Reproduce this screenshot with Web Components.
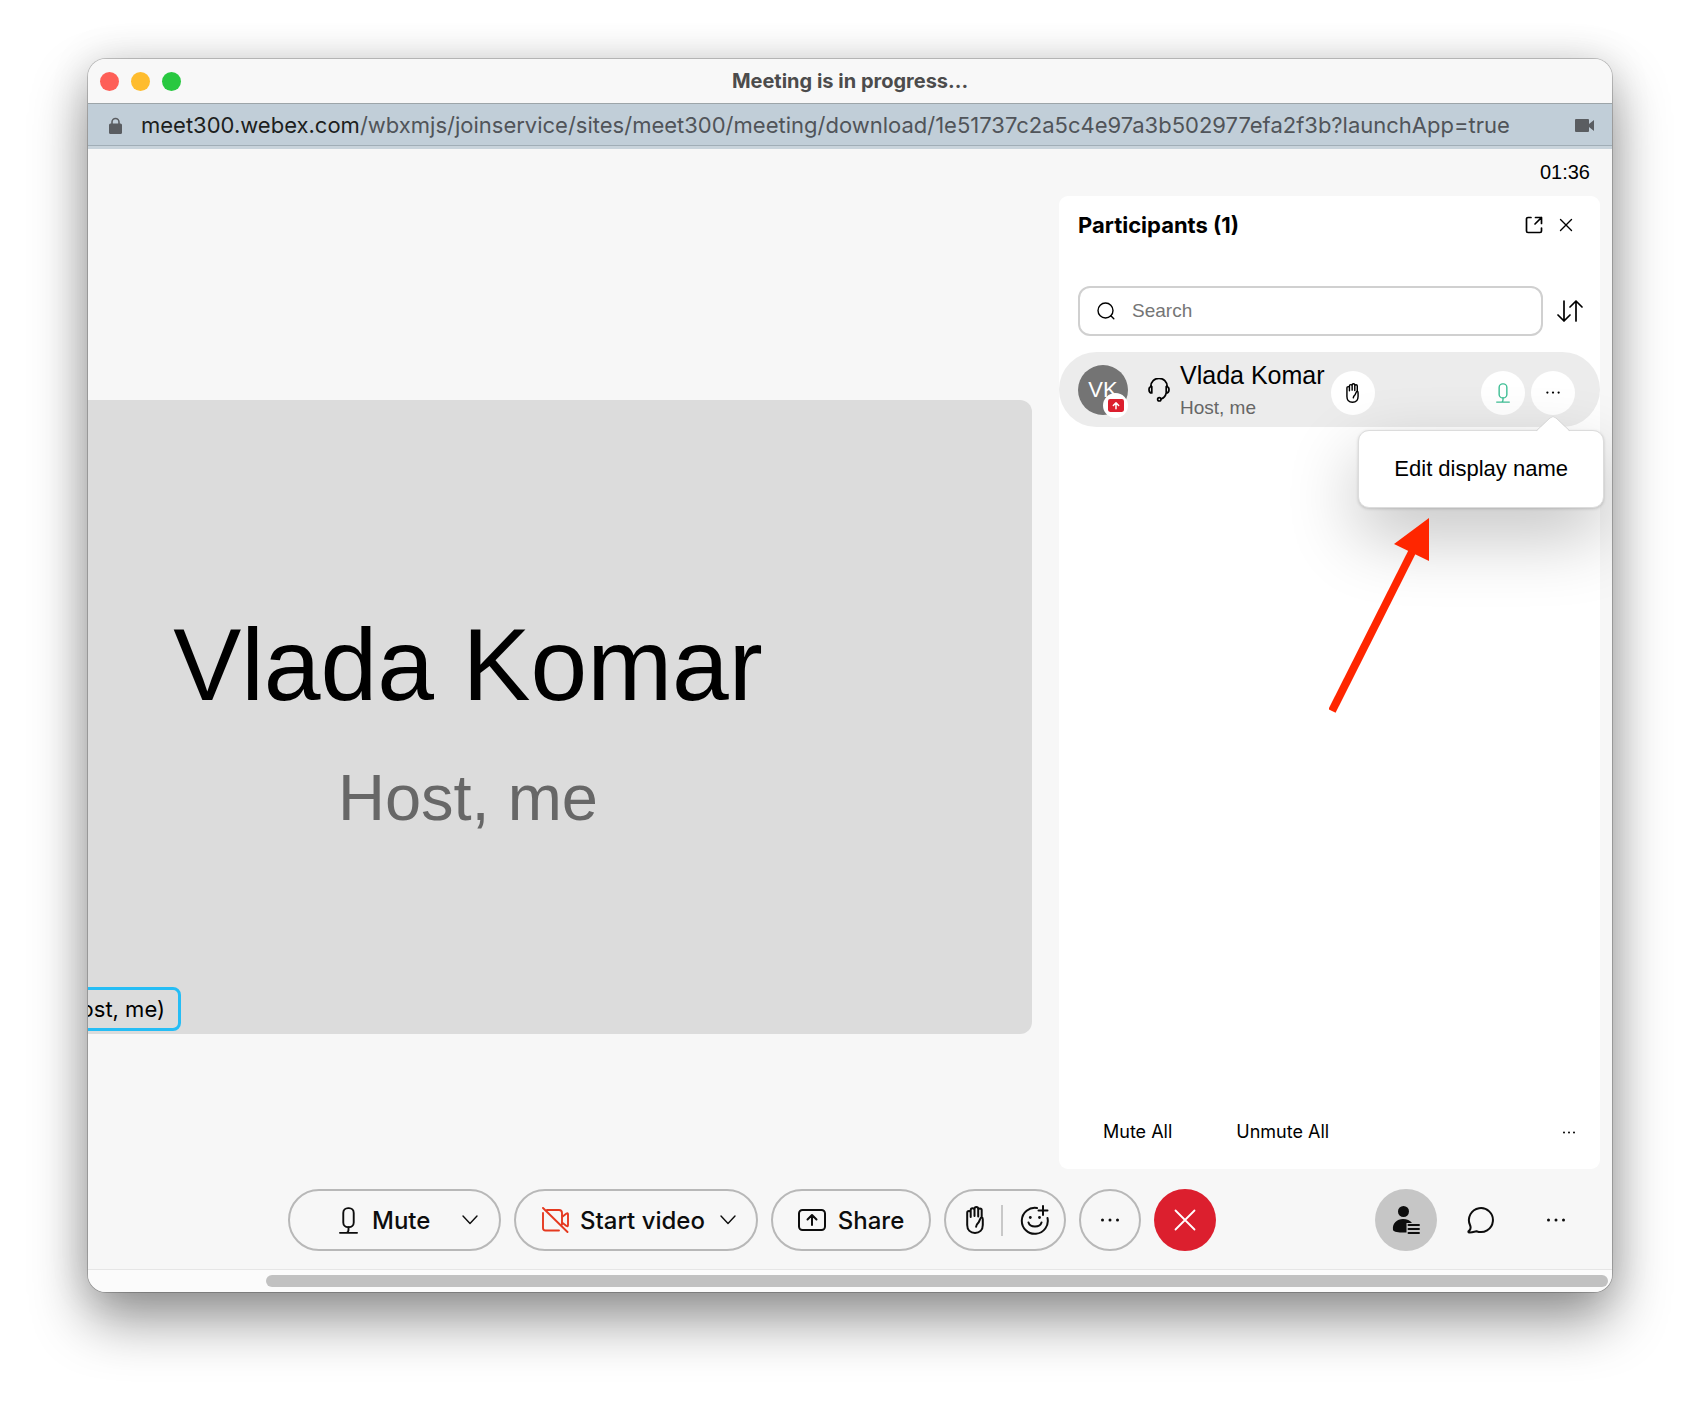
<!DOCTYPE html>
<html lang="en">
<head>
<meta charset="utf-8">
<title>Meeting is in progress...</title>
<style>
  body { margin: 0; background: #fff; font-family: "Liberation Sans", Arial, sans-serif; color: #000; }
  meeting-app { padding: 59px 88px 116px; min-height: 100vh; box-sizing: border-box; }
</style>
</head>
<body>
<meeting-app></meeting-app>
<script>
const define = (name, html) => customElements.define(name, class extends HTMLElement {
  constructor() {
    super();
    this.attachShadow({ mode: 'open' }).innerHTML =
      '<style>:host,*{box-sizing:border-box}button{font:inherit;color:inherit;background:none;border:0;padding:0;margin:0;display:flex;align-items:center;justify-content:center}</style>' + html;
  }
});

const ICONS = {
  lock: [13, 17, '<path d="M3 8V5a3.500 3.500 0 0 1 7 0v3" stroke-width="1.600"/><rect y="6.500" width="13" height="10.500" rx="1.500" fill="currentColor" stroke="none"/>'],
  camera: [19, 13, '<path d="M1 0h12q1 0 1 1v4l5-4v11l-5-4v4q0 1-1 1H1q-1 0-1-1V1q0-1 1-1z" fill="currentColor" stroke="none"/>'],
  popout: [18, 18, '<path d="M6 1.500H3A1.500 1.500 0 0 0 1.500 3v12A1.500 1.500 0 0 0 3 16.500h12a1.500 1.500 0 0 0 1.500-1.500v-3M10.500 1.500h6v6M16.500 1.500L10 8"/>'],
  close: [14, 14, '<path d="M1.500 1.500l11 11M12.500 1.500l-11 11" stroke-width="1.400"/>'],
  leave: [22, 22, '<path d="M1.500 1.500l19 19M20.500 1.500l-19 19" stroke-width="1.800"/>'],
  search: [18, 18, '<circle cx="8.500" cy="8.500" r="7.500" stroke-width="1.400"/><path d="M13.800 13.800l3 3" stroke-width="1.400"/>'],
  sort: [26, 22, '<path d="M7 1v20M1 15l6 6 6-6M19 21V1M13 7l6-6 6 6" stroke-width="1.700"/>'],
  headset: [22, 24, '<path d="M2.800 8.500A8.200 8.200 0 0 1 19.200 8.500M3.800 8.500c-2 0-2.800 1.300-2.800 3.200s.8 3.300 2.800 3.300zM18.200 8.500c2 0 2.800 1.300 2.800 3.200s-.8 3.300-2.800 3.300zM18.200 15c-.8 3.500-3 5.300-5.200 6"/><circle cx="11.300" cy="21.300" r="1.700"/>'],
  hand: [18, 28, '<path d="M1.200 11V6.800a1.700 1.700 0 0 1 3.500 0V4.200a1.800 1.800 0 0 1 3.800 0V2.900a1.800 1.800 0 0 1 3.700 0v1.300a1.700 1.700 0 0 1 3.500 0v7c1 .6 1.200 1.500 1.100 2.800V19c0 5-3.300 8-7.800 8s-7.800-3-7.800-8zM4.700 6.800V11M8.500 4.200V10M12.200 4.200V10.500M15.700 11.200c-2 1-2 4-3.400 5.600-1.400 1.300-2.100 2.300-2.200 4" />'],
  mic: [20, 28, '<rect x="4.500" y="1" width="11" height="20" rx="5"/><path d="M10 21v2.500q0 3-2 3.500M1 27h18" />'],
  novideo: [28, 26, '<path d="M2 6v15q0 2.500 2.500 2.500H18M6 3h12q3 0 3 3v11.500M21 10l4.500-3.500q1.500-.8 1.500 1V18q0 1.800-1.500 1L21 15.500M2 1l24.500 24" stroke-width="1.900"/>'],
  share: [28, 22, '<rect x="1" y="1" width="26" height="20" rx="3.500"/><path d="M14 16V6.500M9.500 10.500L14 6l4.500 4.500"/>'],
  smile: [30, 30, '<path d="M17 3A13 13 0 1 0 27.500 13M23 1v9M18.500 5.500h9M8.500 17.500c1.500 5.300 11.500 5.300 13 0"/><g fill="currentColor" stroke="none"><circle cx="10.300" cy="12.500" r="1.400"/><circle cx="19.500" cy="12.500" r="1.400"/></g>'],
  chevron: [16, 10, '<path d="M1 1l7 7.500L15 1" stroke-width="1.400"/>'],
  dots: [18, 4, '<g fill="currentColor" stroke="none"><circle cx="1.500" cy="2" r="1.500"/><circle cx="9" cy="2" r="1.500"/><circle cx="16.500" cy="2" r="1.500"/></g>'],
  people: [28, 28, '<g fill="currentColor" stroke="none"><circle cx="11.500" cy="5.500" r="5.500"/><path d="M1 24c-.8-7 4-11 10-11 4 0 7 1.200 9 4h-5.500v9.500C9 26.700 2 26.500 1 24z"/></g><path d="M16.500 19h10.500M16.500 23h10.500M16.500 27h10.500" stroke-width="1.900"/>'],
  chat: [28, 28, '<path d="M3 19A12 12 0 1 1 9.500 25.200c-2 .5-4.500 1.300-7 1.300-1.300 0-1.500-.8-.5-1.600 1.700-1.400 2-3.500 1-5.900z"/>'],
  present: [15, 12, '<rect width="15" height="12" rx="2" fill="#dc1f2e" stroke="none"/><path d="M7.500 9V4M5 6l2.500-2.500L10 6" stroke="#fff" stroke-width="1.400"/>']
};
customElements.define('ui-icon', class extends HTMLElement {
  connectedCallback() {
    const [w, h, body] = ICONS[this.getAttribute('name')];
    const s = this.getAttribute('width') || w;
    (this.shadowRoot || this.attachShadow({ mode: 'open' })).innerHTML =
      `<style>:host{display:block;flex:none}svg{display:block}</style><svg aria-hidden="true" width="${s}" height="${Math.round(s * h / w)}" viewBox="0 0 ${w} ${h}" fill="none" stroke="currentColor" stroke-width="${this.getAttribute('stroke') || 2}" stroke-linecap="round" stroke-linejoin="round">${body}</svg>`;
  }
});

define('title-bar', `
<style>
  :host { display: grid; grid-template-columns: 1fr auto 1fr; align-items: center; height: 45px; padding: 0 12px; background: #f8f8f8; border-bottom: 1px solid #9da5a9; font-family: Inter, sans-serif; }
  .lights { display: flex; gap: 12px; }
  .lights button { width: 19px; height: 19px; border-radius: 50%; }
  h1 { margin: 0; font-size: 20px; line-height: 24px; font-weight: 700; color: #4c4c4c; }
</style>
<div class="lights">
  <button aria-label="Close" style="background:#fe5f57"></button>
  <button aria-label="Minimize" style="background:#febc2e"></button>
  <button aria-label="Zoom" style="background:#28c840"></button>
</div>
<h1><slot></slot></h1><span></span>`);

define('address-bar', `
<style>
  :host { display: flex; align-items: center; height: 45px; padding: 0 18px 0 21px; background: #c1ced8; border-bottom: 3px solid #c8d3db; box-shadow: inset 0 -1px #a0adb6; color: #5a5d61; font-family: Inter, sans-serif; }
  p { flex: 1; margin: 0 0 0 19px; font-size: 22px; line-height: 26px; color: #505459; white-space: nowrap; }
  b { font-weight: 400; color: #1c1e20; }
</style>
<ui-icon name="lock"></ui-icon>
<p><b><slot name="host"></slot></b><slot></slot></p>
<ui-icon name="camera"></ui-icon>`);

define('video-tile', `
<style>
  :host { display: flex; flex-direction: column; align-items: center; position: relative; height: 634px; padding: 206px 184px 0 0; background: #dcdcdc; border-radius: 0 12px 12px 0; overflow: hidden; white-space: nowrap; }
  h2 { margin: 0; font-size: 102px; line-height: 118px; font-weight: 400; }
  p { margin: 36px 0 0; font-size: 65px; line-height: 76px; color: #676767; }
  .tag { position: absolute; left: -10px; bottom: 3px; height: 44px; width: 103px; border: 3px solid #25bdf5; border-radius: 8px; padding-right: 13px; display: flex; align-items: center; justify-content: flex-end; font: 22px Inter, sans-serif; }
</style>
<h2><slot name="name"></slot></h2>
<p><slot name="role"></slot></p>
<div class="tag"><slot name="tag"></slot></div>`);

define('popup-menu', `
<style>
  :host { display: block; position: absolute; z-index: 2; }
  .menu { border: 1px solid #dcdcdc; border-radius: 11px; background: #fff; box-shadow: 0 28px 70px rgba(0,0,0,.24), 0 1px 3px rgba(0,0,0,.16); padding: 20px 35px; }
  button { font-size: 22px; line-height: 36px; white-space: nowrap; }
  svg { position: absolute; top: -14px; right: 33px; display: block; }
</style>
<div class="menu" role="menu"><button role="menuitem"><slot></slot></button></div>
<svg width="36" height="16" viewBox="0 0 36 16" aria-hidden="true"><path d="M1 16L15 2q3-3 6 0l14 14z" fill="#fff"/><path d="M1 15L15 2q3-3 6 0l14 13" fill="none" stroke="#d8d8d8"/></svg>`);

define('participant-row', `
<style>
  :host { display: flex; align-items: center; position: relative; height: 75px; padding: 0 25px 0 19px; background: #ececec; border-radius: 38px; }
  .avatar { position: relative; width: 50px; height: 50px; border-radius: 50%; background: #747474; color: #fff; font-size: 22px; display: flex; align-items: center; justify-content: center; }
  .badge { position: absolute; right: 0; bottom: -3px; width: 25px; height: 25px; border-radius: 50%; background: #fff; display: flex; align-items: center; justify-content: center; }
  .headset { margin: 0 10px 0 20px; }
  .who { white-space: nowrap; }
  .name { font-size: 25px; line-height: 30px; }
  .role { font-size: 19px; line-height: 24px; margin-top: 6px; color: #666; }
  .round { width: 44px; height: 44px; border-radius: 50%; background: #fff; margin-top: 6px; }
  .hand { margin-left: 6px; }
  .end { margin-left: auto; display: flex; gap: 6px; }
  .mic { color: #3fbf95; }
  popup-menu { top: 78px; right: -4px; }
</style>
<div class="avatar"><slot name="initials"></slot><span class="badge"><ui-icon name="present" width="16"></ui-icon></span></div>
<ui-icon class="headset" name="headset" stroke="1.7"></ui-icon>
<div class="who"><div class="name"><slot name="name"></slot></div><div class="role"><slot name="role"></slot></div></div>
<button class="round hand" aria-label="Raise hand"><ui-icon name="hand" width="13"></ui-icon></button>
<div class="end">
  <button class="round mic" aria-label="Mute"><ui-icon name="mic" width="14"></ui-icon></button>
  <button class="round" aria-label="More"><ui-icon name="dots" width="14"></ui-icon></button>
</div>
<popup-menu><slot name="menu"></slot></popup-menu>`);

define('pointer-arrow', `
<style>:host { display: block; position: absolute; z-index: 3; } svg { display: block; }</style>
<svg width="102" height="196" viewBox="0 0 102 196" aria-hidden="true"><path d="M3 194L83 35" stroke="#ff2600" stroke-width="8"/><path d="M100 1L65 27l35 17z" fill="#ff2600"/></svg>`);

define('participants-panel', `
<style>
  :host { display: flex; flex-direction: column; position: relative; width: 541px; flex: none; background: #fff; border-radius: 9px; }
  header { display: flex; align-items: center; padding: 15px 27px 0 19px; }
  h2 { margin: 0; flex: 1; font: 700 22px/28px Inter, sans-serif; }
  header button { margin-left: 16px; }
  .tools { display: flex; align-items: center; padding: 47px 17px 16px 19px; gap: 14px; }
  label { flex: 1; display: flex; align-items: center; gap: 17px; height: 50px; border: 2px solid #d0d0d0; border-radius: 12px; padding: 0 17px; }
  input { flex: 1; min-width: 0; border: 0; outline: 0; background: none; padding: 0; font: 19px/24px "Liberation Sans", Arial, sans-serif; }
  input::placeholder { color: #757575; opacity: 1; }
  footer { margin-top: auto; display: flex; align-items: center; padding: 0 25px 24px 44px; font: 18px/26px Inter, sans-serif; }
  footer button + button { margin-left: 64px; }
  footer button:last-child { margin-left: auto; }
  pointer-arrow { left: 270px; top: 321px; }
</style>
<header><h2><slot name="heading"></slot></h2><button aria-label="Pop out"><ui-icon name="popout" stroke="1.7"></ui-icon></button><button aria-label="Close panel"><ui-icon name="close"></ui-icon></button></header>
<div class="tools"><label><ui-icon name="search"></ui-icon><input type="text" placeholder="Search" aria-label="Search"></label><button aria-label="Sort"><ui-icon name="sort"></ui-icon></button></div>
<slot></slot>
<footer><button>Mute All</button><button>Unmute All</button><button aria-label="More"><ui-icon name="dots" width="12"></ui-icon></button></footer>
<pointer-arrow></pointer-arrow>`);

define('control-bar', `
<style>
  :host { display: flex; align-items: center; padding: 20px 25px 18px 200px; font-size: 24px; font-weight: 500; color: #0d0d0d; font-family: Inter, sans-serif; }
  .main, .side { display: flex; align-items: center; gap: 13px; }
  .side { margin-left: auto; }
  button { white-space: nowrap; }
  .pill { height: 62px; border: 2px solid #b8b8b8; border-radius: 32px; display: flex; align-items: center; gap: 12px; }
  .mute { width: 213px; padding-left: 49px; justify-content: flex-start; gap: 14px; }
  .video { width: 244px; padding-left: 25px; justify-content: flex-start; gap: 11px; }
  .video ui-icon:first-child { color: #e5391f; }
  .share { width: 160px; }
  .chev { margin-left: 4px; }
  .mute .chev { margin-left: 18px; }
  .pair { width: 122px; padding: 0 14px 0 20px; justify-content: space-between; gap: 0; }
  .pair i { width: 2px; height: 31px; background: #c8c8c8; }
  .round { width: 62px; height: 62px; border-radius: 50%; }
  .more { border: 2px solid #b8b8b8; }
  .leave { background: #dc1f2e; color: #fff; }
  .on { background: #c6c6c6; }
</style>
<div class="main">
  <button class="pill mute"><ui-icon name="mic" width="19"></ui-icon>Mute<ui-icon class="chev" name="chevron"></ui-icon></button>
  <button class="pill video"><ui-icon name="novideo"></ui-icon>Start video<ui-icon class="chev" name="chevron"></ui-icon></button>
  <button class="pill share"><ui-icon name="share"></ui-icon>Share</button>
  <div class="pill pair"><button aria-label="Raise hand"><ui-icon name="hand"></ui-icon></button><i></i><button aria-label="Reactions"><ui-icon name="smile"></ui-icon></button></div>
  <button class="round more" aria-label="More options"><ui-icon name="dots"></ui-icon></button>
  <button class="round leave" aria-label="Leave meeting"><ui-icon name="leave"></ui-icon></button>
</div>
<div class="side">
  <button class="round on" aria-label="Participants"><ui-icon name="people"></ui-icon></button>
  <button class="round" aria-label="Chat"><ui-icon name="chat"></ui-icon></button>
  <button class="round" aria-label="More panels"><ui-icon name="dots"></ui-icon></button>
</div>`);

define('scroll-track', `
<style>
  :host { display: block; height: 23px; padding: 5px 4px 5px 178px; background: #fbfbfb; border-top: 1px solid #e6e6e6; }
  div { height: 12px; border-radius: 6px; background: #c1c1c1; }
</style><div></div>`);

define('meeting-app', `
<style>
  :host { display: flex; }
  .window { flex: 1; min-width: 0; display: flex; flex-direction: column; background: #f7f7f7; border-radius: 18px; overflow: hidden; box-shadow: 0 0 0 1px rgba(0,0,0,.2), 0 28px 56px rgba(0,0,0,.42), 0 0 40px rgba(0,0,0,.12); }
  time { align-self: flex-end; margin-right: 22px; font-size: 20px; line-height: 47px; }
  .body { flex: 1; display: flex; gap: 27px; padding-right: 12px; }
  .stage { flex: 1; min-width: 0; padding-top: 204px; }
</style>
<div class="window">
  <title-bar>Meeting is in progress...</title-bar>
  <address-bar><span slot="host">meet300.webex.com</span>/wbxmjs/joinservice/sites/meet300/meeting/download/1e51737c2a5c4e97a3b502977efa2f3b?launchApp=true</address-bar>
  <time>01:36</time>
  <div class="body">
    <div class="stage"><video-tile><span slot="name">Vlada Komar</span><span slot="role">Host, me</span><span slot="tag">ost, me)</span></video-tile></div>
    <participants-panel><span slot="heading">Participants (1)</span>
      <participant-row><span slot="initials">VK</span><span slot="name">Vlada Komar</span><span slot="role">Host, me</span><span slot="menu">Edit display name</span></participant-row>
    </participants-panel>
  </div>
  <control-bar></control-bar>
  <scroll-track></scroll-track>
</div>`);
</script>
</body>
</html>
